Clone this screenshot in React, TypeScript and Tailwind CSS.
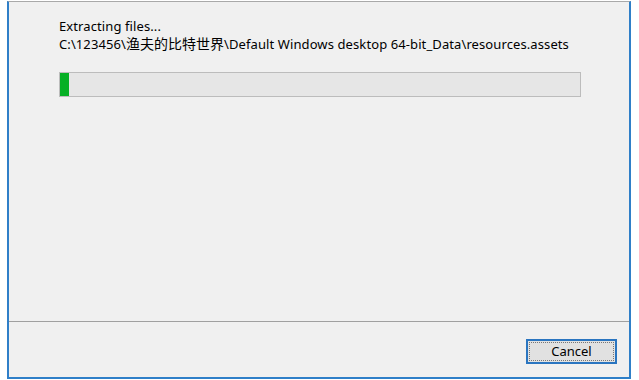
import React from 'react';

export default function App() {
  const progress = 1.8;

  return (
    <div className="w-[639px] h-[380px] bg-white pl-[7px] pr-[8px] pt-[1px] overflow-hidden">
      <div className="flex flex-col h-[378px] bg-[#f0f0f0] border-x-2 border-b-2 border-t border-x-[#2f7fc8] border-b-[#2f7fc8] border-t-[#a9a9a9]">
        <div className="flex-1 pl-[50px] pt-[16px] text-[13px] leading-[17px] tracking-[0.1px] text-black [font-family:'Noto_Sans','Noto_Sans_CJK_SC',sans-serif]">
          <div>Extracting files...</div>
          <div className="whitespace-nowrap">
            C:\123456\<span className="text-[14px] tracking-normal">渔夫的比特世界</span>\Default Windows desktop 64-bit_Data\resources.assets
          </div>
          <div className="mt-[19px] w-[522px] h-[25px] border border-[#bcbcbc] bg-[#e6e6e6]">
            <div className="h-full bg-[#06b025]" style={{ width: `${progress}%` }} />
          </div>
        </div>
        <div className="h-[56px] border-t border-[#a0a0a0] flex justify-end pt-[17px] pr-[12px]">
          <button className="w-[91px] h-[25px] border-2 border-[#2a75c0] bg-[#e1e1e1] text-[13px] text-black [font-family:'Noto_Sans',sans-serif] flex items-center justify-center">
            <span className="w-[85px] h-[19px] border border-dotted border-[#777] flex items-center justify-center leading-none">Cancel</span>
          </button>
        </div>
      </div>
    </div>
  );
}
